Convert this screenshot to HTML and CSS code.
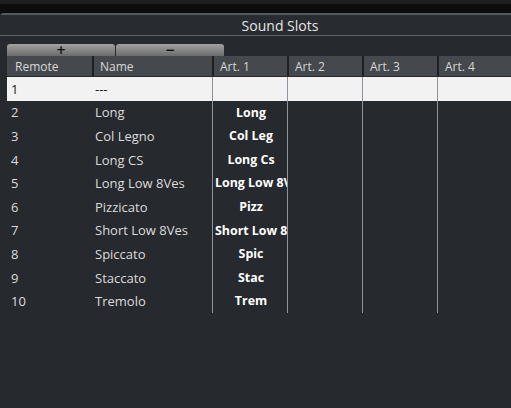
FILE: index.html
```html
<!DOCTYPE html>
<html>
<head>
<meta charset="utf-8">
<link rel="stylesheet" href="styles.css">
</head>
<body>
<div class="topstrip"></div>
<div class="panel">
  <div class="titlebar"><span class="title">Sound Slots</span></div>
  <div class="toolbar">
    <div class="btn">+</div>
    <div class="btn">−</div>
  </div>
  <div class="table">
    <div class="row head">
      <div class="c c-remote">Remote</div>
      <div class="c c-name">Name</div>
      <div class="c c-art">Art. 1</div>
      <div class="c c-art">Art. 2</div>
      <div class="c c-art">Art. 3</div>
      <div class="c c-art">Art. 4</div>
      <div class="c c-rest"></div>
    </div>
    <div class="row sel">
      <div class="c c-remote">1</div><div class="c c-name">---</div>
      <div class="c c-art"></div><div class="c c-art"></div><div class="c c-art"></div><div class="c c-art"></div><div class="c c-rest"></div>
    </div>
    <div class="row">
      <div class="c c-remote">2</div><div class="c c-name">Long</div>
      <div class="c c-art b">Long</div><div class="c c-art"></div><div class="c c-art"></div><div class="c c-art"></div><div class="c c-rest"></div>
    </div>
    <div class="row">
      <div class="c c-remote">3</div><div class="c c-name">Col Legno</div>
      <div class="c c-art b">Col Leg</div><div class="c c-art"></div><div class="c c-art"></div><div class="c c-art"></div><div class="c c-rest"></div>
    </div>
    <div class="row">
      <div class="c c-remote">4</div><div class="c c-name">Long CS</div>
      <div class="c c-art b">Long Cs</div><div class="c c-art"></div><div class="c c-art"></div><div class="c c-art"></div><div class="c c-rest"></div>
    </div>
    <div class="row">
      <div class="c c-remote">5</div><div class="c c-name">Long Low 8Ves</div>
      <div class="c c-art b">Long Low 8Ves</div><div class="c c-art"></div><div class="c c-art"></div><div class="c c-art"></div><div class="c c-rest"></div>
    </div>
    <div class="row">
      <div class="c c-remote">6</div><div class="c c-name">Pizzicato</div>
      <div class="c c-art b">Pizz</div><div class="c c-art"></div><div class="c c-art"></div><div class="c c-art"></div><div class="c c-rest"></div>
    </div>
    <div class="row">
      <div class="c c-remote">7</div><div class="c c-name">Short Low 8Ves</div>
      <div class="c c-art b">Short Low 8Ves</div><div class="c c-art"></div><div class="c c-art"></div><div class="c c-art"></div><div class="c c-rest"></div>
    </div>
    <div class="row">
      <div class="c c-remote">8</div><div class="c c-name">Spiccato</div>
      <div class="c c-art b">Spic</div><div class="c c-art"></div><div class="c c-art"></div><div class="c c-art"></div><div class="c c-rest"></div>
    </div>
    <div class="row">
      <div class="c c-remote">9</div><div class="c c-name">Staccato</div>
      <div class="c c-art b">Stac</div><div class="c c-art"></div><div class="c c-art"></div><div class="c c-art"></div><div class="c c-rest"></div>
    </div>
    <div class="row">
      <div class="c c-remote">10</div><div class="c c-name">Tremolo</div>
      <div class="c c-art b">Trem</div><div class="c c-art"></div><div class="c c-art"></div><div class="c c-art"></div><div class="c c-rest"></div>
    </div>
  </div>
</div>
</body>
</html>
```

FILE: styles.css
```css
html, body {
  margin: 0;
  padding: 0;
  background: #0c0c0c;
  overflow: hidden;
  width: 511px;
  height: 408px;
}
.topstrip {
  height: 4px;
  background: #1f1f1f;
  margin-bottom: 9px;
}
.panel {
  height: 393px;
  background: #26292d;
  border-top: 2px solid #55585c;
  border-radius: 4px 0 0 0;
  font-family: "Open Sans", sans-serif;
}
.titlebar {
  height: 20px;
  padding-left: 49px;
  border-bottom: 1px solid #5c5f63;
  display: flex;
  justify-content: center;
  align-items: center;
  background: #282b2f;
}
.title {
  color: #e6e6e6;
  font-size: 14px;
}
.toolbar {
  display: flex;
  gap: 1px;
  padding: 8px 0 0 7px;
}
.btn {
  width: 108px;
  height: 12px;
  border-radius: 3px 3px 0 0;
  background: linear-gradient(#a2a2a2, #6c6c6c);
  color: #111;
  font: bold 12px/12px "DejaVu Sans", sans-serif;
  text-align: center;
}
.table {
  margin-left: 7px;
}
.row {
  display: grid;
  grid-template-columns: 85px 120px 75px 75px 75px 75px 1fr;
  height: 23.6px;
  color: #dcdcdc;
  font-size: 13px;
}
.row.head {
  height: 20px;
  background: #45484c;
  color: #d8d8d8;
  font-size: 12px;
  margin-bottom: 1px;
}
.row.sel {
  background: #f2f2f2;
  color: #1a1a1a;
}
.c {
  display: flex;
  align-items: center;
  white-space: nowrap;
  overflow: hidden;
}
.c-remote { padding-left: 4px; }
.c-name { padding-left: 3px; }
.c-art { border-left: 1px solid #8a95a0; }
.c.b {
  display: block;
  text-align: center;
  line-height: 23.6px;
  padding-left: 2px;
  font-size: 12.4px;
  font-weight: bold;
  color: #ffffff;
}
.head .c { padding-left: 8px; }
.head .c-name, .head .c-art { border-left: 2px solid #1d1f22; padding-left: 6px; }
```
